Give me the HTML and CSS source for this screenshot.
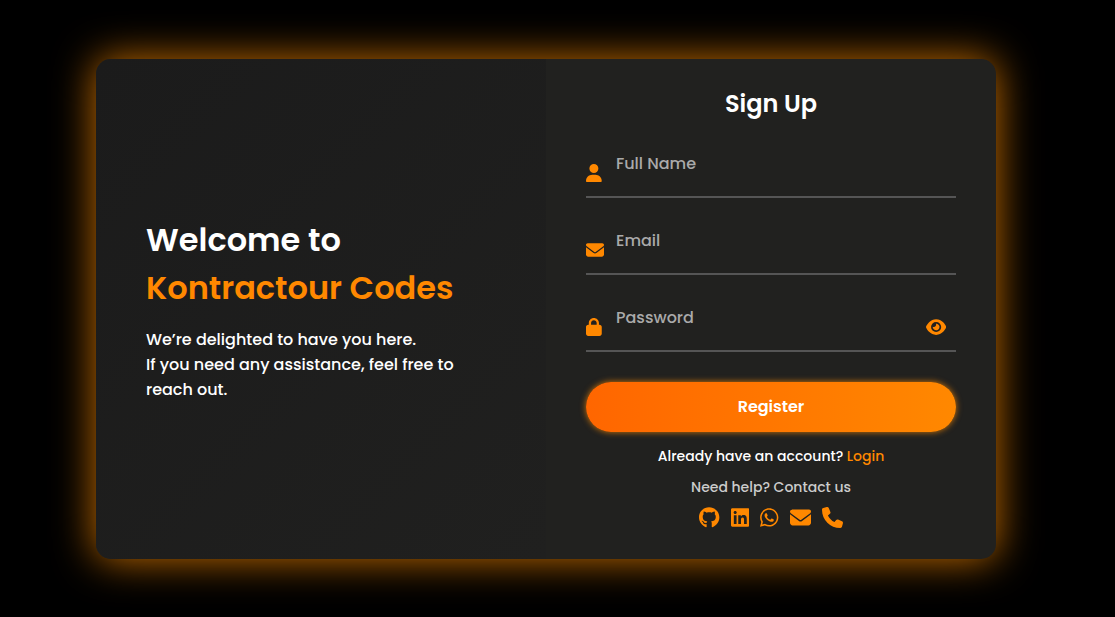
FILE: index.html
```html
<!DOCTYPE html>
<html lang="en">
<head>
<meta charset="utf-8">
<meta name="viewport" content="width=device-width, initial-scale=1">
<title>Sign Up</title>
<link rel="stylesheet" href="styles.css">
</head>
<body>
<main class="card">
  <section class="welcome">
    <h1 class="welcome-title">Welcome to <span class="brand">Kontractour Codes</span></h1>
    <p class="welcome-text">We’re delighted to have you here.<br>If you need any assistance, feel free to reach out.</p>
  </section>
  <section class="signup">
    <h2 class="signup-title">Sign Up</h2>
    <form class="form">
      <div class="field">
        <svg class="icon" viewBox="0 0 448 512" aria-hidden="true"><path d="M224 256A128 128 0 1 0 224 0a128 128 0 1 0 0 256zm-45.700 48C79.800 304 0 383.800 0 482.300C0 498.700 13.300 512 29.700 512H418.300c16.400 0 29.700-13.300 29.700-29.700C448 383.800 368.200 304 269.700 304H178.300z"/></svg>
        <input class="input" id="name" type="text" autocomplete="off">
        <label class="label" for="name">Full Name</label>
      </div>
      <div class="field">
        <svg class="icon" viewBox="0 0 512 512" aria-hidden="true"><path d="M48 64C21.500 64 0 85.500 0 112c0 15.100 7.100 29.300 19.200 38.400L236.800 313.600c11.400 8.500 27 8.500 38.400 0L492.800 150.400c12.100-9.100 19.200-23.300 19.200-38.400c0-26.500-21.500-48-48-48H48zM0 176V384c0 35.300 28.700 64 64 64H448c35.300 0 64-28.700 64-64V176L294.400 339.200c-22.800 17.100-54 17.100-76.800 0L0 176z"/></svg>
        <input class="input" id="email" type="email" autocomplete="off">
        <label class="label" for="email">Email</label>
      </div>
      <div class="field">
        <svg class="icon" viewBox="0 0 448 512" aria-hidden="true"><path d="M144 144v48H304V144c0-44.200-35.800-80-80-80s-80 35.800-80 80zM80 192V144C80 64.500 144.500 0 224 0s144 64.500 144 144v48h16c35.300 0 64 28.700 64 64V448c0 35.300-28.700 64-64 64H64c-35.300 0-64-28.700-64-64V256c0-35.300 28.700-64 64-64H80z"/></svg>
        <input class="input" id="password" type="password" autocomplete="off">
        <label class="label" for="password">Password</label>
        <button class="toggle" type="button" aria-label="Show password">
          <svg class="icon" viewBox="0 0 576 512" aria-hidden="true"><path d="M288 32c-80.800 0-145.500 36.800-192.600 80.600C48.600 156 17.300 208 2.500 243.700c-3.300 7.900-3.300 16.700 0 24.600C17.300 304 48.600 356 95.400 399.400C142.500 443.200 207.200 480 288 480s145.500-36.800 192.600-80.600c46.800-43.500 78.100-95.400 93-131.100c3.300-7.900 3.300-16.700 0-24.600c-14.900-35.700-46.200-87.700-93-131.100C433.500 68.800 368.800 32 288 32zM144 256a144 144 0 1 1 288 0 144 144 0 1 1 -288 0zm144-64c0 35.300-28.700 64-64 64c-7.100 0-13.900-1.200-20.300-3.300c-5.500-1.800-11.900 1.600-11.700 7.400c.3 6.900 1.300 13.800 3.200 20.700c13.700 51.200 66.400 81.600 117.600 67.900s81.600-66.400 67.900-117.600c-11.100-41.500-47.800-69.400-88.600-71.100c-5.800-.2-9.200 6.100-7.400 11.700c2.100 6.400 3.300 13.200 3.300 20.300z"/></svg>
        </button>
      </div>
      <button class="submit" type="submit">Register</button>
    </form>
    <p class="login">Already have an account? <a class="link" href="#login">Login</a></p>
    <p class="help">Need help? Contact us</p>
    <nav class="social" aria-label="Contact">
      <a class="link" href="#github" aria-label="GitHub"><svg class="icon" viewBox="0 0 496 512" aria-hidden="true"><path d="M165.900 397.400c0 2-2.300 3.600-5.200 3.600-3.300.3-5.600-1.300-5.600-3.600 0-2 2.300-3.600 5.200-3.600 3-.3 5.600 1.300 5.600 3.600zM244.800 8C106.100 8 0 113.300 0 252c0 110.900 69.800 205.800 169.500 239.200 12.800 2.300 17.300-5.600 17.300-12.100 0-6.200-.3-40.400-.3-61.400 0 0-70 15-84.700-29.800 0 0-11.400-29.100-27.800-36.600 0 0-22.900-15.700 1.600-15.400 0 0 24.900 2 38.600 25.800 21.900 38.600 58.600 27.500 72.900 20.900 2.300-16 8.800-27.100 16-33.700-55.900-6.200-112.300-14.300-112.300-110.500 0-27.500 7.600-41.300 23.600-58.900-2.600-6.500-11.100-33.300 2.600-67.900 20.900-6.500 69 27 69 27 20-5.600 41.500-8.500 62.800-8.500s42.800 2.900 62.800 8.500c0 0 48.100-33.600 69-27 13.700 34.700 5.200 61.400 2.600 67.900 16 17.700 25.800 31.500 25.800 58.900 0 96.500-58.900 104.200-114.800 110.500 9.200 7.900 17 22.900 17 46.400 0 33.700-.3 75.400-.3 83.600 0 6.500 4.600 14.400 17.300 12.100C428.200 457.800 496 362.900 496 252 496 113.300 383.500 8 244.800 8z"/></svg></a>
      <a class="link" href="#linkedin" aria-label="LinkedIn"><svg class="icon" viewBox="0 0 448 512" aria-hidden="true"><path d="M416 32H31.900C14.300 32 0 46.500 0 64.300v383.400C0 465.500 14.300 480 31.900 480H416c17.600 0 32-14.500 32-32.300V64.300c0-17.800-14.400-32.300-32-32.300zM135.400 416H69V202.200h66.500V416zm-33.200-243c-21.300 0-38.500-17.300-38.500-38.500S80.900 96 102.200 96c21.200 0 38.500 17.300 38.500 38.500 0 21.300-17.200 38.500-38.500 38.500zm282.100 243h-66.400V312c0-24.800-.5-56.700-34.500-56.700-34.600 0-39.900 27-39.900 54.900V416h-66.400V202.200h63.700v29.200h.9c8.900-16.800 30.600-34.500 62.900-34.500 67.200 0 79.700 44.300 79.700 101.900V416z"/></svg></a>
      <a class="link" href="#whatsapp" aria-label="WhatsApp"><svg class="icon" viewBox="0 0 448 512" aria-hidden="true"><path d="M380.900 97.100C339 55.100 283.200 32 223.900 32c-122.400 0-222 99.600-222 222 0 39.100 10.200 77.300 29.600 111L0 480l117.700-30.900c32.400 17.700 68.900 27 106.100 27h.1c122.300 0 224.100-99.600 224.100-222 0-59.300-25.200-115-67.100-157zm-157 341.600c-33.200 0-65.700-8.900-94-25.700l-6.700-4-69.800 18.300L72 359.200l-4.400-7c-18.500-29.400-28.200-63.300-28.200-98.200 0-101.700 82.800-184.500 184.600-184.500 49.300 0 95.600 19.200 130.400 54.100 34.800 34.900 56.200 81.200 56.100 130.500 0 101.800-84.900 184.600-186.600 184.600zm101.200-138.200c-5.500-2.800-32.800-16.200-37.900-18-5.100-1.900-8.800-2.800-12.500 2.800-3.700 5.600-14.300 18-17.600 21.800-3.200 3.700-6.500 4.200-12 1.400-32.600-16.300-54-29.100-75.500-66-5.700-9.800 5.700-9.100 16.300-30.300 1.800-3.700.9-6.900-.5-9.700-1.400-2.800-12.500-30.100-17.100-41.200-4.500-10.800-9.100-9.300-12.500-9.500-3.200-.2-6.900-.2-10.600-.2-3.700 0-9.700 1.400-14.800 6.900-5.100 5.600-19.400 19-19.400 46.300 0 27.300 19.900 53.700 22.600 57.400 2.800 3.700 39.100 59.700 94.800 83.800 35.200 15.200 49 16.500 66.600 13.900 10.700-1.600 32.800-13.400 37.400-26.400 4.600-13 4.600-24.100 3.200-26.400-1.300-2.500-5-3.900-10.500-6.600z"/></svg></a>
      <a class="link" href="#mail" aria-label="Email us"><svg class="icon" viewBox="0 0 512 512" aria-hidden="true"><path d="M48 64C21.500 64 0 85.500 0 112c0 15.100 7.100 29.300 19.200 38.400L236.800 313.600c11.400 8.500 27 8.500 38.400 0L492.800 150.400c12.100-9.100 19.200-23.300 19.200-38.400c0-26.500-21.500-48-48-48H48zM0 176V384c0 35.300 28.700 64 64 64H448c35.300 0 64-28.700 64-64V176L294.400 339.200c-22.800 17.100-54 17.100-76.800 0L0 176z"/></svg></a>
      <a class="link" href="#phone" aria-label="Call us"><svg class="icon" viewBox="0 0 512 512" aria-hidden="true"><path d="M164.900 24.600c-7.700-18.600-28-28.500-47.400-23.200l-88 24C12.100 30.200 0 46 0 64C0 311.400 200.600 512 448 512c18 0 33.800-12.100 38.600-29.500l24-88c5.300-19.400-4.600-39.700-23.200-47.400l-96-40c-16.300-6.800-35.200-2.100-46.300 11.600L304.700 368C234.300 334.700 177.300 277.700 144 207.300L193.300 167c13.700-11.200 18.400-30 11.600-46.300l-40-96z"/></svg></a>
    </nav>
  </section>
</main>
</body>
</html>
```
FILE: styles.css
```css
* {
  box-sizing: border-box;
  margin: 0;
}

body {
  display: flex;
  align-items: center;
  justify-content: center;
  min-height: 100vh;
  padding: 20px 43px 20px 20px;
  background: #000;
  color: #fff;
  font-family: Poppins, Inter, "Open Sans", sans-serif;
  font-size: 16px;
  font-weight: 500;
}

.card {
  display: grid;
  grid-template-columns: 1fr 1fr;
  width: 100%;
  max-width: 900px;
  min-height: 500px;
  border-radius: 15px;
  overflow: hidden;
  background: #21211f;
  box-shadow: 0 0 40px rgba(255, 140, 0, 0.8);
}

.welcome {
  display: flex;
  flex-direction: column;
  justify-content: center;
  gap: 15px;
  padding: 50px;
  background: linear-gradient(135deg, #1b1b1b, #20201f);
}

.welcome-title {
  font-size: 32px;
  font-weight: 600;
  line-height: 48px;
}

.brand {
  display: block;
  color: #ff8800;
}

.welcome-text {
  line-height: 25px;
}

.signup {
  display: flex;
  flex-direction: column;
  padding: 27px 40px;
  text-align: center;
}

.signup-title {
  margin-bottom: 26px;
  font-size: 24px;
  font-weight: 600;
  line-height: 36px;
}

.form {
  display: flex;
  flex-direction: column;
  gap: 27px;
}

.field {
  position: relative;
  display: flex;
  align-items: center;
  height: 50px;
}

.icon {
  display: block;
  height: 18px;
  fill: #ff8800;
}

.field > .icon {
  position: absolute;
  left: 0;
}

.input {
  width: 100%;
  height: 100%;
  padding: 0 40px 0 30px;
  border: 0;
  border-bottom: 2px solid #555;
  outline: none;
  background: transparent;
  color: #fff;
  font: inherit;
}

.label {
  position: absolute;
  top: 4px;
  left: 30px;
  color: #aaa;
  line-height: 24px;
}

.toggle {
  position: absolute;
  right: 10px;
  padding: 0;
  border: 0;
  background: none;
  cursor: pointer;
}

.submit {
  height: 50px;
  margin-top: 3px;
  border: 0;
  border-radius: 25px;
  background: linear-gradient(90deg, #ff6600, #ff8800);
  box-shadow: 0 0 6px rgba(255, 140, 0, 0.8);
  color: #fff;
  font: inherit;
  font-weight: 600;
  cursor: pointer;
}

.link {
  color: #ff8800;
  text-decoration: none;
}

.login,
.help {
  margin-top: 14px;
  font-size: 14px;
  line-height: 21px;
}

.help {
  margin-top: 10px;
  color: #ccc;
}

.social {
  display: flex;
  justify-content: center;
  gap: 11px;
  margin-top: 9px;
}

.social .icon {
  height: 21px;
}
```
